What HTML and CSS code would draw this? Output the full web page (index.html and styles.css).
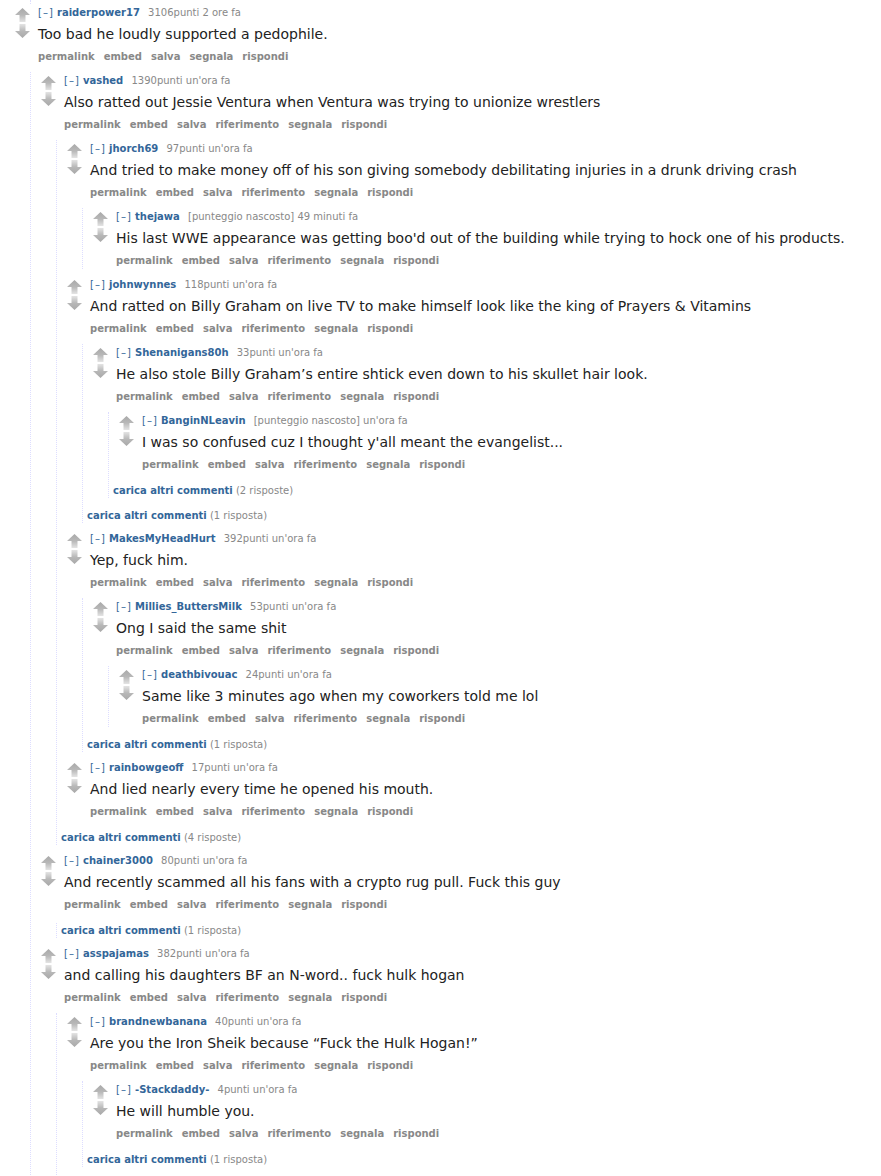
FILE: index.html
```html
<!DOCTYPE html>
<html lang="it">
<head>
    <meta charset="UTF-8">
    <title>commenti</title>
    <link rel="stylesheet" href="styles.css">
</head>
<body>
<div class="page">
    <div class="tail"></div>

    <div class="comment top">
        <div class="row">
            <div class="midcol"><span class="arrow up"></span><span class="arrow down"></span></div>
            <div class="entry">
                <p class="tagline"><a class="expand">[–]</a> <a class="author">raiderpower17</a> <span class="score">3106punti</span> 2 ore fa</p>
                <div class="md">Too bad he loudly supported a pedophile.</div>
                <ul class="buttons"><li><a>permalink</a></li><li><a>embed</a></li><li><a>salva</a></li><li><a>segnala</a></li><li><a>rispondi</a></li></ul>
            </div>
        </div>
        <div class="child continues">

            <div class="comment">
                <div class="row">
                    <div class="midcol"><span class="arrow up"></span><span class="arrow down"></span></div>
                    <div class="entry">
                        <p class="tagline"><a class="expand">[–]</a> <a class="author">vashed</a> <span class="score">1390punti</span> un'ora fa</p>
                        <div class="md">Also ratted out Jessie Ventura when Ventura was trying to unionize wrestlers</div>
                        <ul class="buttons"><li><a>permalink</a></li><li><a>embed</a></li><li><a>salva</a></li><li><a>riferimento</a></li><li><a>segnala</a></li><li><a>rispondi</a></li></ul>
                    </div>
                </div>
                <div class="child">

                    <div class="comment">
                        <div class="row">
                            <div class="midcol"><span class="arrow up"></span><span class="arrow down"></span></div>
                            <div class="entry">
                                <p class="tagline"><a class="expand">[–]</a> <a class="author">jhorch69</a> <span class="score">97punti</span> un'ora fa</p>
                                <div class="md">And tried to make money off of his son giving somebody debilitating injuries in a drunk driving crash</div>
                                <ul class="buttons"><li><a>permalink</a></li><li><a>embed</a></li><li><a>salva</a></li><li><a>riferimento</a></li><li><a>segnala</a></li><li><a>rispondi</a></li></ul>
                            </div>
                        </div>
                        <div class="child">
                            <div class="comment">
                                <div class="row">
                                    <div class="midcol"><span class="arrow up"></span><span class="arrow down"></span></div>
                                    <div class="entry">
                                        <p class="tagline"><a class="expand">[–]</a> <a class="author">thejawa</a> <span class="score">[punteggio nascosto]</span> 49 minuti fa</p>
                                        <div class="md">His last WWE appearance was getting boo'd out of the building while trying to hock one of his products.</div>
                                        <ul class="buttons"><li><a>permalink</a></li><li><a>embed</a></li><li><a>salva</a></li><li><a>riferimento</a></li><li><a>segnala</a></li><li><a>rispondi</a></li></ul>
                                    </div>
                                </div>
                            </div>
                        </div>
                    </div>

                    <div class="comment">
                        <div class="row">
                            <div class="midcol"><span class="arrow up"></span><span class="arrow down"></span></div>
                            <div class="entry">
                                <p class="tagline"><a class="expand">[–]</a> <a class="author">johnwynnes</a> <span class="score">118punti</span> un'ora fa</p>
                                <div class="md">And ratted on Billy Graham on live TV to make himself look like the king of Prayers &amp; Vitamins</div>
                                <ul class="buttons"><li><a>permalink</a></li><li><a>embed</a></li><li><a>salva</a></li><li><a>riferimento</a></li><li><a>segnala</a></li><li><a>rispondi</a></li></ul>
                            </div>
                        </div>
                        <div class="child">
                            <div class="comment">
                                <div class="row">
                                    <div class="midcol"><span class="arrow up"></span><span class="arrow down"></span></div>
                                    <div class="entry">
                                        <p class="tagline"><a class="expand">[–]</a> <a class="author">Shenanigans80h</a> <span class="score">33punti</span> un'ora fa</p>
                                        <div class="md">He also stole Billy Graham’s entire shtick even down to his skullet hair look.</div>
                                        <ul class="buttons"><li><a>permalink</a></li><li><a>embed</a></li><li><a>salva</a></li><li><a>riferimento</a></li><li><a>segnala</a></li><li><a>rispondi</a></li></ul>
                                    </div>
                                </div>
                                <div class="child">
                                    <div class="comment">
                                        <div class="row">
                                            <div class="midcol"><span class="arrow up"></span><span class="arrow down"></span></div>
                                            <div class="entry">
                                                <p class="tagline"><a class="expand">[–]</a> <a class="author">BanginNLeavin</a> <span class="score">[punteggio nascosto]</span> un'ora fa</p>
                                                <div class="md">I was so confused cuz I thought y'all meant the evangelist...</div>
                                                <ul class="buttons"><li><a>permalink</a></li><li><a>embed</a></li><li><a>salva</a></li><li><a>riferimento</a></li><li><a>segnala</a></li><li><a>rispondi</a></li></ul>
                                            </div>
                                        </div>
                                    </div>
                                    <p class="more"><a>carica altri commenti</a> (2 risposte)</p>
                                </div>
                            </div>
                            <p class="more"><a>carica altri commenti</a> (1 risposta)</p>
                        </div>
                    </div>

                    <div class="comment">
                        <div class="row">
                            <div class="midcol"><span class="arrow up"></span><span class="arrow down"></span></div>
                            <div class="entry">
                                <p class="tagline"><a class="expand">[–]</a> <a class="author">MakesMyHeadHurt</a> <span class="score">392punti</span> un'ora fa</p>
                                <div class="md">Yep, fuck him.</div>
                                <ul class="buttons"><li><a>permalink</a></li><li><a>embed</a></li><li><a>salva</a></li><li><a>riferimento</a></li><li><a>segnala</a></li><li><a>rispondi</a></li></ul>
                            </div>
                        </div>
                        <div class="child">
                            <div class="comment">
                                <div class="row">
                                    <div class="midcol"><span class="arrow up"></span><span class="arrow down"></span></div>
                                    <div class="entry">
                                        <p class="tagline"><a class="expand">[–]</a> <a class="author">Millies_ButtersMilk</a> <span class="score">53punti</span> un'ora fa</p>
                                        <div class="md">Ong I said the same shit</div>
                                        <ul class="buttons"><li><a>permalink</a></li><li><a>embed</a></li><li><a>salva</a></li><li><a>riferimento</a></li><li><a>segnala</a></li><li><a>rispondi</a></li></ul>
                                    </div>
                                </div>
                                <div class="child">
                                    <div class="comment">
                                        <div class="row">
                                            <div class="midcol"><span class="arrow up"></span><span class="arrow down"></span></div>
                                            <div class="entry">
                                                <p class="tagline"><a class="expand">[–]</a> <a class="author">deathbivouac</a> <span class="score">24punti</span> un'ora fa</p>
                                                <div class="md">Same like 3 minutes ago when my coworkers told me lol</div>
                                                <ul class="buttons"><li><a>permalink</a></li><li><a>embed</a></li><li><a>salva</a></li><li><a>riferimento</a></li><li><a>segnala</a></li><li><a>rispondi</a></li></ul>
                                            </div>
                                        </div>
                                    </div>
                                </div>
                            </div>
                            <p class="more"><a>carica altri commenti</a> (1 risposta)</p>
                        </div>
                    </div>

                    <div class="comment">
                        <div class="row">
                            <div class="midcol"><span class="arrow up"></span><span class="arrow down"></span></div>
                            <div class="entry">
                                <p class="tagline"><a class="expand">[–]</a> <a class="author">rainbowgeoff</a> <span class="score">17punti</span> un'ora fa</p>
                                <div class="md">And lied nearly every time he opened his mouth.</div>
                                <ul class="buttons"><li><a>permalink</a></li><li><a>embed</a></li><li><a>salva</a></li><li><a>riferimento</a></li><li><a>segnala</a></li><li><a>rispondi</a></li></ul>
                            </div>
                        </div>
                    </div>

                    <p class="more"><a>carica altri commenti</a> (4 risposte)</p>
                </div>
            </div>

            <div class="comment">
                <div class="row">
                    <div class="midcol"><span class="arrow up"></span><span class="arrow down"></span></div>
                    <div class="entry">
                        <p class="tagline"><a class="expand">[–]</a> <a class="author">chainer3000</a> <span class="score">80punti</span> un'ora fa</p>
                        <div class="md">And recently scammed all his fans with a crypto rug pull. Fuck this guy</div>
                        <ul class="buttons"><li><a>permalink</a></li><li><a>embed</a></li><li><a>salva</a></li><li><a>riferimento</a></li><li><a>segnala</a></li><li><a>rispondi</a></li></ul>
                    </div>
                </div>
                <div class="child">
                    <p class="more"><a>carica altri commenti</a> (1 risposta)</p>
                </div>
            </div>

            <div class="comment">
                <div class="row">
                    <div class="midcol"><span class="arrow up"></span><span class="arrow down"></span></div>
                    <div class="entry">
                        <p class="tagline"><a class="expand">[–]</a> <a class="author">asspajamas</a> <span class="score">382punti</span> un'ora fa</p>
                        <div class="md">and calling his daughters BF an N-word.. fuck hulk hogan</div>
                        <ul class="buttons"><li><a>permalink</a></li><li><a>embed</a></li><li><a>salva</a></li><li><a>riferimento</a></li><li><a>segnala</a></li><li><a>rispondi</a></li></ul>
                    </div>
                </div>
                <div class="child continues">
                    <div class="comment">
                        <div class="row">
                            <div class="midcol"><span class="arrow up"></span><span class="arrow down"></span></div>
                            <div class="entry">
                                <p class="tagline"><a class="expand">[–]</a> <a class="author">brandnewbanana</a> <span class="score">40punti</span> un'ora fa</p>
                                <div class="md">Are you the Iron Sheik because “Fuck the Hulk Hogan!”</div>
                                <ul class="buttons"><li><a>permalink</a></li><li><a>embed</a></li><li><a>salva</a></li><li><a>riferimento</a></li><li><a>segnala</a></li><li><a>rispondi</a></li></ul>
                            </div>
                        </div>
                        <div class="child">
                            <div class="comment">
                                <div class="row">
                                    <div class="midcol"><span class="arrow up"></span><span class="arrow down"></span></div>
                                    <div class="entry">
                                        <p class="tagline"><a class="expand">[–]</a> <a class="author">-Stackdaddy-</a> <span class="score">4punti</span> un'ora fa</p>
                                        <div class="md">He will humble you.</div>
                                        <ul class="buttons"><li><a>permalink</a></li><li><a>embed</a></li><li><a>salva</a></li><li><a>riferimento</a></li><li><a>segnala</a></li><li><a>rispondi</a></li></ul>
                                    </div>
                                </div>
                            </div>
                            <p class="more"><a>carica altri commenti</a> (1 risposta)</p>
                        </div>
                    </div>
                </div>
            </div>

        </div>
    </div>
</div>
</body>
</html>
```

FILE: styles.css
```css
body {
    margin: 0;
    background-color: #fff;
    color: #222;
    font-family: "DejaVu Sans", Verdana, sans-serif;
}

.page {
    padding-left: 14px;
}

.tail {
    height: 4px;
    margin-left: 16px;
    border-left: 1px dotted #ddf;
}

.comment {
    margin-top: 7px;
    padding-top: 1px;
}

    .comment.top {
        margin-top: 0;
    }

.row {
    display: flex;
}

.midcol {
    width: 24px;
    flex: none;
    padding-top: 3px;
}

.arrow {
    display: block;
    width: 15px;
    height: 14px;
    margin-left: 1px;
}

    .arrow.up {
        background: linear-gradient(to bottom, #a9a9a9 0%, #b8b8b8 50%, #e4e4e4 100%);
        clip-path: polygon(50% 0, 100% 50%, 70% 50%, 70% 100%, 30% 100%, 30% 50%, 0 50%);
    }

    .arrow.down {
        margin-top: 2px;
        background: linear-gradient(to top, #a9a9a9 0%, #b8b8b8 50%, #e4e4e4 100%);
        clip-path: polygon(30% 0, 70% 0, 70% 50%, 100% 50%, 50% 100%, 0 50%, 30% 50%);
    }

.tagline {
    margin: 0;
    font-size: 10px;
    line-height: 16px;
    color: #888;
}

    .tagline .expand {
        color: #369;
        letter-spacing: 1px;
    }

    .tagline .author {
        color: #369;
        font-weight: bold;
        margin-right: 5px;
    }

.md {
    margin-top: 3px;
    font-size: 14px;
    line-height: 20px;
    color: #222;
}

.buttons {
    list-style: none;
    display: flex;
    gap: 9px;
    margin: 5px 0 0;
    padding: 0;
    font-size: 10px;
    line-height: 16px;
    font-weight: bold;
}

    .buttons a {
        color: #888;
    }

.child {
    margin-left: 16px;
    border-left: 1px dotted #ddf;
}

    .child > .comment {
        margin-left: 9px;
    }

    .child.continues {
        padding-bottom: 30px;
    }

.more {
    margin: 10px 0 0 4px;
    font-size: 10px;
    line-height: 15px;
    color: #888;
}

    .more a {
        color: #369;
        font-weight: bold;
    }
```
